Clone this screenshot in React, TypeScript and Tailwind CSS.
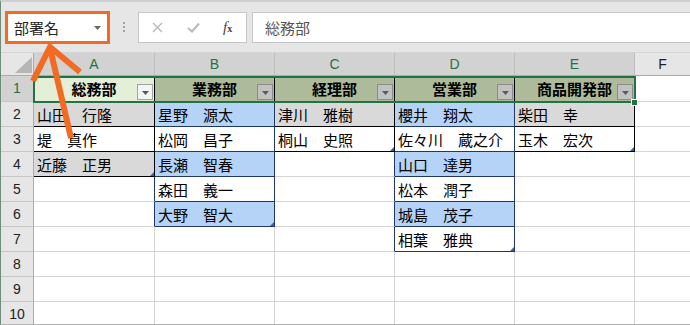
import React from "react";

type T = { h: string; rows: string[]; blue: boolean };

const tables: T[] = [
  { h: "総務部", rows: ["山田　行隆", "堤　真作", "近藤　正男"], blue: false },
  { h: "業務部", rows: ["星野　源太", "松岡　昌子", "長瀬　智春", "森田　義一", "大野　智大"], blue: true },
  { h: "経理部", rows: ["津川　雅樹", "桐山　史照"], blue: false },
  { h: "営業部", rows: ["櫻井　翔太", "佐々川　蔵之介", "山口　達男", "松本　潤子", "城島　茂子", "相葉　雅典"], blue: true },
  { h: "商品開発部", rows: ["柴田　幸", "玉木　宏次"], blue: false },
];

const letters = ["A", "B", "C", "D", "E", "F"];

function rightLine(kind: "black" | "navy" | "grid") {
  if (kind === "black") return "border-r-black";
  if (kind === "navy") return "border-r-[#203864]";
  return "border-r-[#d4d4d4]";
}
function bottomLine(kind: "black" | "navy" | "grid") {
  if (kind === "black") return "border-b-black";
  if (kind === "navy") return "border-b-[#203864]";
  return "border-b-[#d4d4d4]";
}

function Dropdown({ active }: { active: boolean }) {
  return (
    <div
      className={
        active
          ? "absolute right-[1px] bottom-[1px] w-[16px] h-[16px] bg-[#f4f4f4] border border-[#a3a3a3] flex items-center justify-center"
          : "absolute right-[1px] bottom-[1px] w-[16px] h-[16px] bg-[#c2c2c2] border border-[#8c8c8c] flex items-center justify-center"
      }
    >
      <svg width="7" height="4" viewBox="0 0 7 4" className="mt-[1px]">
        <path d="M0 0H7L3.5 4Z" fill="#5a5a5a" />
      </svg>
    </div>
  );
}

function ResizeMark() {
  return (
    <svg width="4" height="4" viewBox="0 0 4 4" className="absolute right-0 bottom-0">
      <path d="M4 0V4H0Z" fill="#3f5fae" />
    </svg>
  );
}

export default function App() {
  const cells: React.ReactNode[] = [];

  cells.push(
    <div key="corner" className="relative bg-[#e6e6e6] border-r border-b border-r-[#ababab] border-b-[#ababab]">
      <svg className="absolute left-[14px] top-[4px]" width="17" height="16" viewBox="0 0 17 16">
        <path d="M0 16H17V0Z" fill="#b6b6b6" />
      </svg>
    </div>
  );
  letters.forEach((l, i) => {
    const sel = i < 5;
    cells.push(
      <div
        key={"ch" + l}
        className={
          sel
            ? "flex items-center justify-center bg-[#d2d2d2] border-r border-b border-r-[#bdbdbd] border-b-[#ababab] text-[#217346] text-[14px] font-['Liberation_Sans',sans-serif]"
            : "flex items-center justify-center bg-[#e6e6e6] border-b border-b-[#ababab] text-[#222] text-[14px] font-['Liberation_Sans',sans-serif]"
        }
      >
        {l}
      </div>
    );
  });

  for (let r = 1; r <= 10; r++) {
    cells.push(
      <div
        key={"rh" + r}
        className={
          r === 1
            ? "flex items-center justify-center bg-[#d2d2d2] border-r border-b border-r-[#ababab] border-b-[#c6c6c6] text-[#217346] text-[14px] font-['Liberation_Sans',sans-serif]"
            : "flex items-center justify-center bg-[#e6e6e6] border-r border-b border-r-[#ababab] border-b-[#c6c6c6] text-[#222] text-[14px] font-['Liberation_Sans',sans-serif]"
        }
      >
        {r}
      </div>
    );
    for (let c = 0; c < 6; c++) {
      const t = c < 5 ? tables[c] : null;
      const key = "c" + r + "-" + c;
      if (r === 1) {
        if (t) {
          const active = c === 0;
          cells.push(
            <div
              key={key}
              className={
                active
                  ? "relative flex items-center justify-center bg-[#e3efd6] border-r border-b border-r-black border-b-black text-[15px] font-bold text-black"
                  : "relative flex items-center justify-center bg-[#aebb9b] border-r border-b border-r-black border-b-black text-[15px] font-bold text-black"
              }
            >
              <span className="leading-none">{t.h}</span>
              <Dropdown active={active} />
            </div>
          );
        } else {
          cells.push(<div key={key} className="bg-white border-b border-b-[#d4d4d4]" />);
        }
        continue;
      }
      const i = r - 2;
      if (t && i < t.rows.length) {
        const line = t.blue ? "navy" : "black";
        const banded = i % 2 === 0;
        const bg = banded ? (t.blue ? "bg-[#b4d3f6]" : "bg-[#d9d9d9]") : "bg-white";
        const last = i === t.rows.length - 1;
        cells.push(
          <div
            key={key}
            className={
              "relative flex items-center pl-[3px] border-r border-b text-[15px] text-black whitespace-nowrap " +
              bg +
              " " +
              rightLine(line) +
              " " +
              bottomLine(line)
            }
          >
            <span className="leading-none">{t.rows[i]}</span>
            {last ? <ResizeMark /> : null}
          </div>
        );
      } else {
        const next = c + 1 < 5 ? tables[c + 1] : null;
        const nextIn = next && i < next.rows.length;
        const rl = nextIn ? (next!.blue ? "navy" : "black") : "grid";
        cells.push(
          <div
            key={key}
            className={
              c === 5
                ? "bg-white border-b border-b-[#d4d4d4]"
                : "bg-white border-r border-b border-b-[#d4d4d4] " + rightLine(rl)
            }
          />
        );
      }
    }
  }

  return (
    <div className="relative w-[690px] h-[325px] overflow-hidden bg-white border-l border-l-[#6d8d78] border-t-2 border-t-[#cfcfcf] border-b border-b-[#b4b4b4] flex flex-col font-['Noto_Sans_CJK_JP',sans-serif]">
      <div className="h-[51px] shrink-0 bg-[#e6e6e6] flex items-start pt-[9px] border-b border-b-[#d4d4d4]">
        <div className="ml-[4px] w-[105px] h-[33px] bg-white border-[3px] border-[#f26b22] flex items-center justify-between pl-[6px] pr-[6px]">
          <span className="text-[15px] text-[#262626] leading-none">部署名</span>
          <svg width="7" height="4" viewBox="0 0 7 4">
            <path d="M0 0H7L3.5 4Z" fill="#6a6a6a" />
          </svg>
        </div>
        <div className="ml-[13px] mt-[11px] flex flex-col gap-[2px]">
          <span className="block w-[2px] h-[2px] bg-[#a0a0a0]" />
          <span className="block w-[2px] h-[2px] bg-[#a0a0a0]" />
          <span className="block w-[2px] h-[2px] bg-[#a0a0a0]" />
        </div>
        <div className="ml-[13px] mt-[1px] w-[109px] h-[31px] bg-white border border-[#c6c6c6] flex items-center">
          <svg className="ml-[13px]" width="11" height="11" viewBox="0 0 11 11">
            <path d="M1 1L10 10M10 1L1 10" stroke="#b9b9b9" strokeWidth="1.4" />
          </svg>
          <svg className="ml-[24px]" width="13" height="11" viewBox="0 0 13 11">
            <path d="M1 6L5 9.5L12 1.5" stroke="#b9b9b9" strokeWidth="2" fill="none" />
          </svg>
          <span className="ml-[23px] italic text-[15px] text-[#444] font-['Liberation_Serif',serif] leading-none">
            f<span className="text-[10px] not-italic font-bold">x</span>
          </span>
        </div>
        <div className="ml-[5px] mt-[1px] flex-1 h-[31px] bg-white border border-r-0 border-[#c6c6c6] flex items-center pl-[12px]">
          <span className="text-[15px] text-[#555] leading-none">総務部</span>
        </div>
      </div>

      <div className="grid grid-cols-[33px_121px_120px_120px_120px_120px_1fr] grid-rows-[23px_26px_25px_25px_25px_25px_25px_25px_25px_25px_25px] shrink-0">
        {cells}
      </div>

      <div className="absolute left-[32px] top-[74px] w-[603px] h-[27px] border-2 border-[#217346] pointer-events-none" />
      <div className="absolute left-[630px] top-[97px] w-[7px] h-[7px] bg-[#217346] border border-white pointer-events-none" />

      <svg className="absolute left-[-1px] top-[-2px] pointer-events-none" width="690" height="325" viewBox="0 0 690 325">
        <path d="M33 81L50 47L80 72" stroke="#f26b22" strokeWidth="6" fill="none" strokeLinejoin="miter" />
        <path d="M50 48L71 138" stroke="#f26b22" strokeWidth="6" fill="none" />
      </svg>
    </div>
  );
}
